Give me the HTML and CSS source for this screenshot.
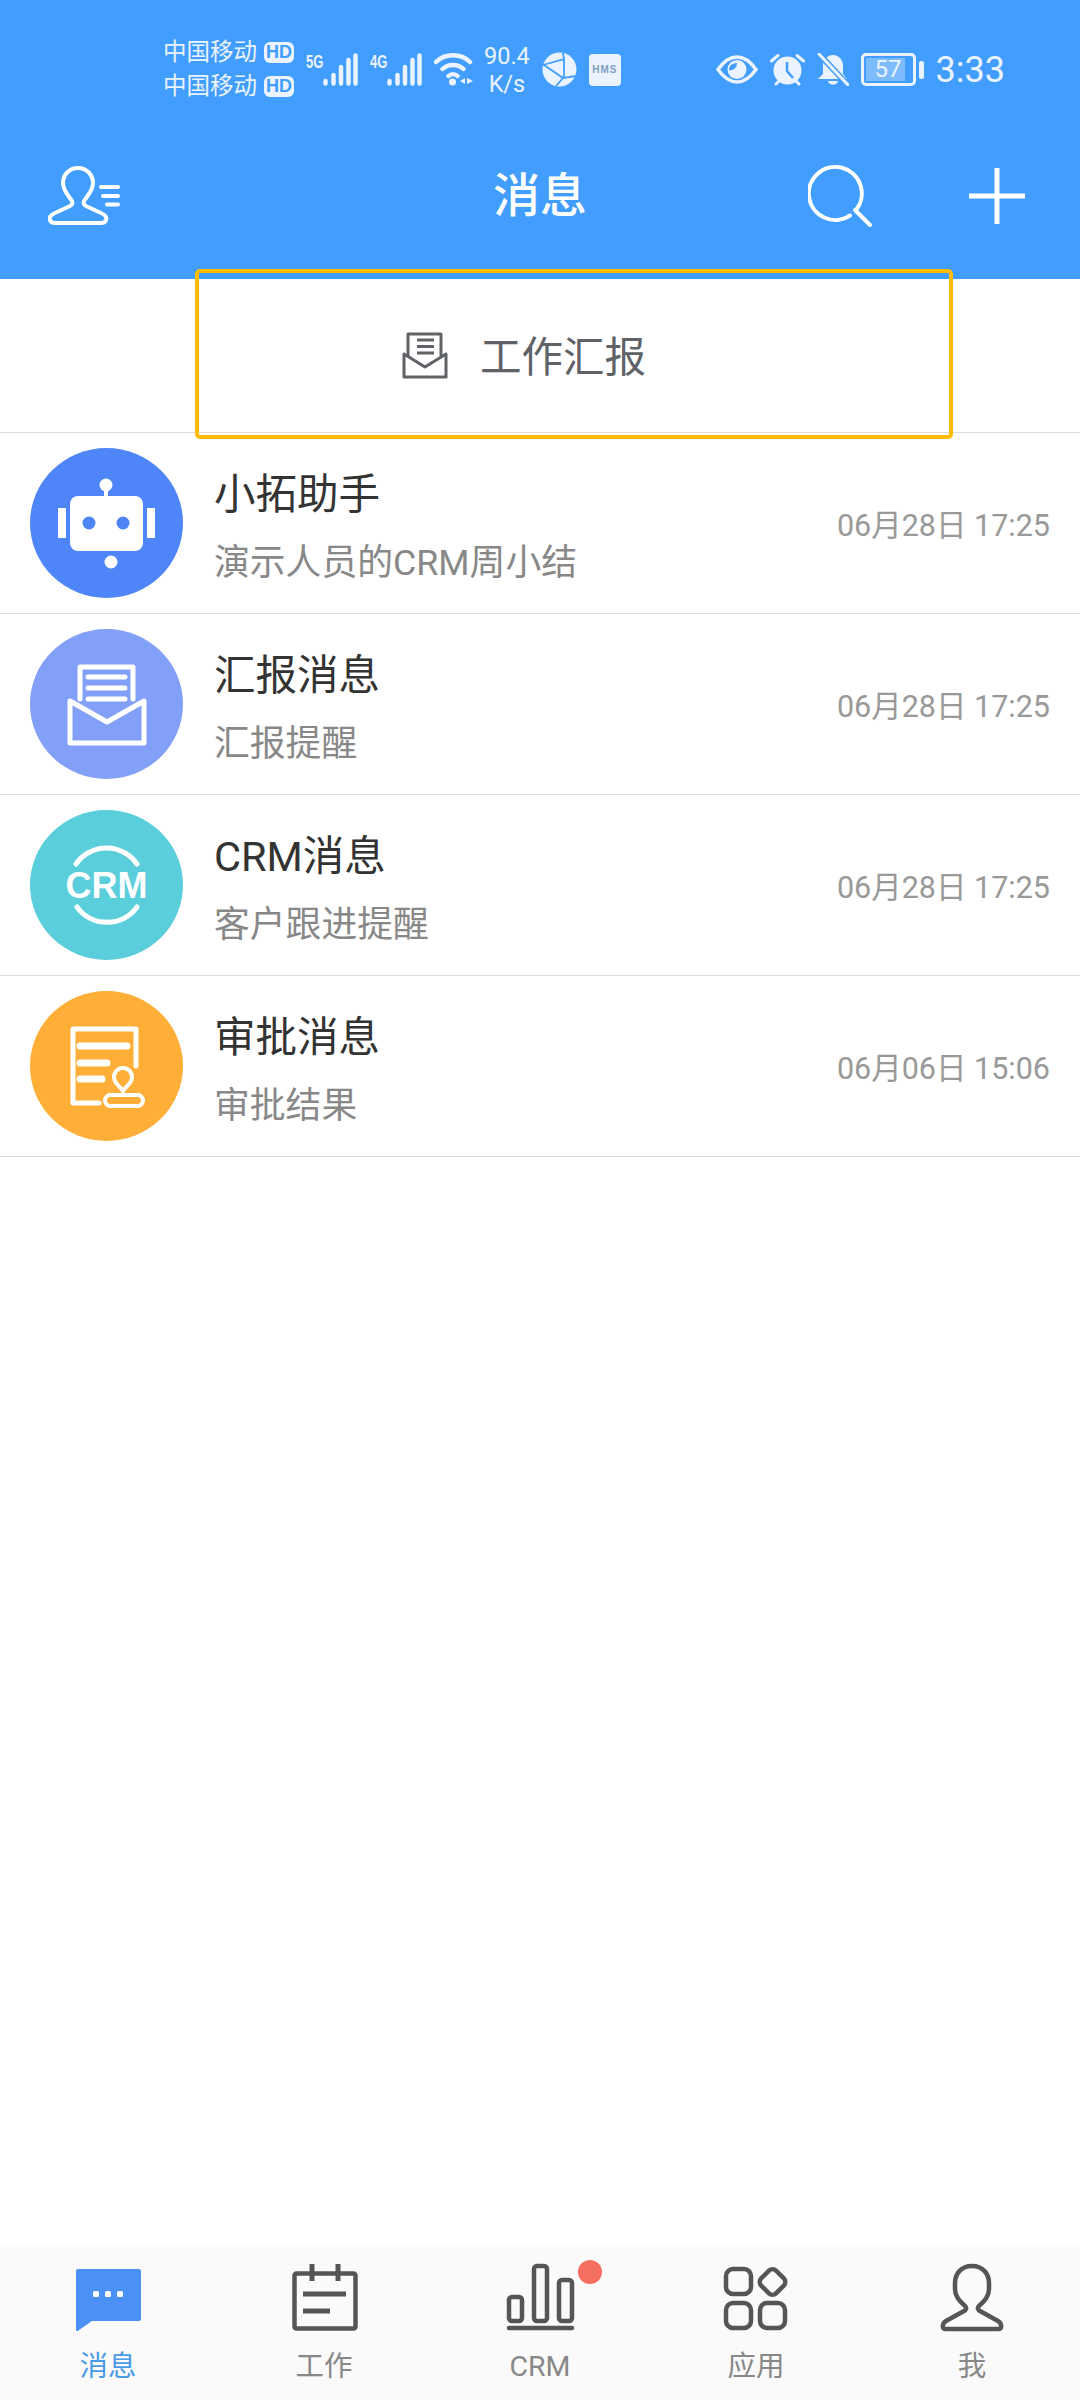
FILE: index.html
```html
<!DOCTYPE html>
<html>
<head>
    <meta charset="UTF-8">
    <title>消息</title>
    <link rel="stylesheet" href="styles.css">
</head>
<body>
<div class="page">
    <div class="header">
        <div class="status">
            <div class="carriers">
                <div class="carrier"><span>中国移动</span><b class="hd">HD</b></div>
                <div class="carrier"><span>中国移动</span><b class="hd">HD</b></div>
            </div>
            <div class="signal">
                <span class="net">5G</span>
                <svg width="35" height="33" viewBox="0 0 35 33"><path d="M2.500 28v2.500M10.500 22v8.500M18 14v16.500M25.500 7v23.500M32.500 2.500v28" class="bars"/></svg>
            </div>
            <div class="signal">
                <span class="net">4G</span>
                <svg width="35" height="33" viewBox="0 0 35 33"><path d="M2.500 28v2.500M10.500 22v8.500M18 14v16.500M25.500 7v23.500M32.500 2.500v28" class="bars"/></svg>
            </div>
            <svg width="40" height="33" viewBox="0 0 40 33">
                <path d="M2 9C11 0 27 0 36 9M8.500 16C14 10.500 24 10.500 29.500 16M14.500 23C17 20.500 21 20.500 23.500 23" class="wifi"/>
                <circle cx="18.500" cy="29" r="3.500" fill="#eaf3ff"/>
                <path d="M31 25v6l-5-3zM33 25v6l6-3z" fill="#eaf3ff"/>
            </svg>
            <div class="speed"><span>90.4</span><span>K/s</span></div>
            <svg width="35" height="35" viewBox="0 0 35 35">
                <circle cx="17.500" cy="17.500" r="17" fill="#eaf3ff"/>
                <path d="M1 13L22 7L21 1M2 13L21 26L14 34M22 7L22 26L34 24" fill="none" stroke="#429efe" stroke-width="1.800"/>
            </svg>
            <div class="hms">HMS</div>
            <div class="status-right">
                <svg width="42" height="29" viewBox="0 0 42 29">
                    <path d="M2 14.500C8 6 15 2 21 2C27 2 34 6 40 14.500C34 23 27 27 21 27C15 27 8 23 2 14.500Z" fill="none" stroke="#eaf3ff" stroke-width="3.500"/>
                    <circle cx="21" cy="14.500" r="9.500" fill="#eaf3ff"/>
                    <path d="M13 15C17 16 21 13 21 8C16 8 13 11 13 15Z" fill="#429efe"/>
                </svg>
                <svg width="35" height="33" viewBox="0 0 35 33">
                    <circle cx="17.500" cy="17.500" r="14" fill="#eaf3ff"/>
                    <path d="M17 9v9l6 7" fill="none" stroke="#429efe" stroke-width="2.500"/>
                    <path d="M1.500 8L8 2.500M33.500 8L27 2.500M6 31l3-3M29 31l-3-3" stroke="#eaf3ff" stroke-width="3" stroke-linecap="round"/>
                </svg>
                <svg width="32" height="33" viewBox="0 0 32 33">
                    <path d="M16 2C22 2 26 7 26 13V21L30 26H1L6 21V13C6 7 10 2 16 2ZM11 28H21C20 33 12 33 11 28Z" fill="#eaf3ff"/>
                    <path d="M2 1L31 32" stroke="#429efe" stroke-width="6"/>
                    <path d="M2 1L31 32" stroke="#eaf3ff" stroke-width="3" stroke-linecap="round"/>
                </svg>
                <div class="battery">
                    <div class="battery-body"><div class="battery-fill"></div><span>57</span></div>
                    <div class="battery-nub"></div>
                </div>
                <span class="clock">3:33</span>
            </div>
        </div>
        <div class="titlebar">
            <div class="bar-left">
                <svg width="72" height="60" viewBox="0 0 72 60" class="line-icon top-icon">
                    <path d="M30 2C21 2 15 9 15 17C15 25 21 30 24 35C25 38 24 39 22 40L7 47C2 49 1 52 2 54C3 57 5 57 7 57H53C55 57 57 57 58 54C59 52 58 49 53 47L38 40C36 39 35 38 36 35C39 30 45 25 45 17C45 9 39 2 30 2Z"/>
                    <path d="M53 21H70M55 30H70M59 38.500H70"/>
                </svg>
            </div>
            <h1>消息</h1>
            <div class="bar-right">
                <svg width="64" height="64" viewBox="0 0 64 64" class="line-icon top-icon search">
                    <path d="M48 47A26.500 26.500 0 1 0 42 52.500M47 47L62 62"/>
                </svg>
                <svg width="56" height="56" viewBox="0 0 56 56" class="line-icon plus">
                    <path d="M28 0V56M0 28H56"/>
                </svg>
            </div>
        </div>
    </div>

    <div class="report-tab">
        <svg width="46" height="47" viewBox="0 0 46 47" class="report-icon">
            <path d="M6 24V2H39V24M15 8H32M15 14.500H32M15 21H32"/>
            <path d="M2 22L23 35L44 22V45H2Z"/>
        </svg>
        <span>工作汇报</span>
    </div>

    <div class="list">
        <div class="row">
            <div class="avatar robot">
                <svg width="153" height="150" viewBox="0 0 153 150">
                    <rect x="40" y="48" width="73" height="55" rx="8" fill="#fff"/>
                    <rect x="28" y="60" width="8" height="30" fill="#fff"/>
                    <rect x="117" y="60" width="8" height="30" fill="#fff"/>
                    <circle cx="59" cy="75" r="6.500" fill="#4e85f8"/>
                    <circle cx="93" cy="75" r="6.500" fill="#4e85f8"/>
                    <circle cx="76" cy="37" r="6.500" fill="#fff"/>
                    <rect x="74" y="38" width="4" height="11" fill="#fff"/>
                    <circle cx="81" cy="114" r="6.500" fill="#fff"/>
                </svg>
            </div>
            <div class="text">
                <div class="name">小拓助手</div>
                <div class="sub">演示人员的CRM周小结</div>
            </div>
            <div class="date">06月28日 17:25</div>
        </div>
        <div class="row">
            <div class="avatar report">
                <svg width="153" height="150" viewBox="0 0 153 150" class="line-icon">
                    <path d="M50 70V38H103V70"/>
                    <path d="M58 48H95M58 59H95M58 70H95"/>
                    <path d="M40 72L77 93L114 72V114H40Z"/>
                </svg>
            </div>
            <div class="text">
                <div class="name">汇报消息</div>
                <div class="sub">汇报提醒</div>
            </div>
            <div class="date">06月28日 17:25</div>
        </div>
        <div class="row">
            <div class="avatar crm">
                <svg width="153" height="150" viewBox="0 0 153 150" class="line-icon">
                    <path d="M46 54A37 37 0 0 1 107 54M47 97A37 37 0 0 0 107 97"/>
                    <text x="76.500" y="88" class="crm-text">CRM</text>
                </svg>
            </div>
            <div class="text">
                <div class="name">CRM消息</div>
                <div class="sub">客户跟进提醒</div>
            </div>
            <div class="date">06月28日 17:25</div>
        </div>
        <div class="row">
            <div class="avatar approve">
                <svg width="153" height="150" viewBox="0 0 153 150" class="line-icon">
                    <path d="M106 75V38H43V112H69"/>
                    <path d="M50 55H97M50 72H77M50 88H72" class="thick"/>
                    <rect x="75" y="104" width="38" height="11" rx="5.500" class="thin"/>
                    <path d="M93 100C91 96 84 93 84 86A9 9 0 1 1 102 86C102 93 95 96 93 100Z" class="thin"/>
                </svg>
            </div>
            <div class="text">
                <div class="name">审批消息</div>
                <div class="sub">审批结果</div>
            </div>
            <div class="date">06月06日 15:06</div>
        </div>
    </div>

    <div class="tabbar">
        <div class="tab active">
            <div class="tab-icon">
                <svg width="72" height="70" viewBox="0 0 72 70">
                    <path d="M6 6H67a2 2 0 0 1 2 2V56a2 2 0 0 1-2 2H20L7 67a1.300 1.300 0 0 1-3-1V8a2 2 0 0 1 2-2Z" fill="#4b90f5"/>
                    <rect x="21" y="28" width="6" height="6" rx="1.500" fill="#fff"/>
                    <rect x="33" y="28" width="6" height="6" rx="1.500" fill="#fff"/>
                    <rect x="45" y="28" width="6" height="6" rx="1.500" fill="#fff"/>
                </svg>
            </div>
            <span>消息</span>
        </div>
        <div class="tab">
            <div class="tab-icon">
                <svg width="72" height="70" viewBox="0 0 72 70" class="tab-line">
                    <rect x="6.500" y="10.500" width="61" height="55" rx="2"/>
                    <path d="M24 1V18M50 1V18" class="tick"/>
                    <path d="M15 31H58M15 48H42" class="tick"/>
                </svg>
            </div>
            <span>工作</span>
        </div>
        <div class="tab">
            <div class="tab-icon">
                <svg width="72" height="70" viewBox="0 0 72 70" class="tab-line">
                    <rect x="5" y="34" width="13" height="24" rx="3"/>
                    <rect x="30" y="3" width="13" height="55" rx="3"/>
                    <rect x="55" y="17" width="13" height="41" rx="3"/>
                    <path d="M5 65H68"/>
                </svg>
                <div class="dot"></div>
            </div>
            <span>CRM</span>
        </div>
        <div class="tab">
            <div class="tab-icon">
                <svg width="72" height="70" viewBox="0 0 72 70" class="tab-line">
                    <rect x="6" y="6" width="25" height="25" rx="7"/>
                    <rect x="6" y="40" width="25" height="25" rx="7"/>
                    <rect x="40" y="40" width="25" height="25" rx="7"/>
                    <rect x="42" y="8.500" width="21" height="21" rx="5" transform="rotate(45 52.500 19)"/>
                </svg>
            </div>
            <span>应用</span>
        </div>
        <div class="tab">
            <div class="tab-icon">
                <svg width="72" height="70" viewBox="0 0 72 70" class="tab-line">
                    <path d="M36 3C25 3 19 11 19 20V26C19 33 23 38 29 43C31 45 30 47 28 48L10 58C6 60 6 66 9 66H63C66 66 66 60 62 58L44 48C42 47 41 45 43 43C49 38 53 33 53 26V20C53 11 47 3 36 3Z"/>
                </svg>
            </div>
            <span>我</span>
        </div>
    </div>

    <div class="highlight"></div>
</div>
</body>
</html>
```

FILE: styles.css
```css
* {
    box-sizing: border-box;
}
body {
    margin: 0;
    background: #fff;
    font-family: Roboto, "Noto Sans CJK SC", sans-serif;
}
svg {
    display: block;
    flex-shrink: 0;
}
.page {
    position: relative;
    width: 1080px;
    height: 2400px;
    display: flex;
    flex-direction: column;
    overflow: hidden;
}

/* header */
.header {
    height: 279px;
    background: #429efe;
    color: #fff;
}
.status {
    height: 139px;
    display: flex;
    align-items: center;
    gap: 12px;
    padding-left: 163px;
    color: #eaf3ff;
}
.carriers {
    display: flex;
    flex-direction: column;
    gap: 5px;
    margin-top: -1px;
}
.carrier {
    display: flex;
    align-items: center;
    gap: 7px;
    font-size: 23.500px;
    line-height: 29px;
}
.hd {
    width: 30px;
    height: 21px;
    border-radius: 6px;
    background: #eaf3ff;
    color: #429efe;
    font-family: "Liberation Sans", sans-serif;
    font-size: 18px;
    line-height: 21px;
    text-align: center;
}
.signal {
    display: flex;
    align-items: flex-start;
}
.net {
    width: 17px;
    margin-top: -2px;
    font-family: "Liberation Sans", sans-serif;
    font-size: 18px;
    font-weight: bold;
    line-height: 22px;
    white-space: nowrap;
    transform: scaleX(.72);
    transform-origin: left;
}
.bars, .wifi {
    fill: none;
    stroke: #eaf3ff;
    stroke-width: 4.500;
    stroke-linecap: round;
}
.speed {
    display: flex;
    flex-direction: column;
    align-items: center;
    margin-left: -2px;
    font-size: 23.500px;
    line-height: 28px;
}
.hms {
    width: 32px;
    height: 32px;
    border-radius: 4px;
    background: #eaf3ff;
    color: #7f9dc0;
    font-family: "Liberation Sans", sans-serif;
    font-size: 10px;
    font-weight: bold;
    letter-spacing: 1px;
    line-height: 32px;
    text-align: center;
}
.status-right {
    display: flex;
    align-items: center;
    gap: 12px;
    margin-left: auto;
    padding-right: 75px;
}
.battery {
    display: flex;
    align-items: center;
    gap: 3px;
}
.battery-body {
    position: relative;
    width: 55px;
    height: 33px;
    border: 3px solid #eaf3ff;
    border-radius: 5px;
    font-size: 24px;
    line-height: 27px;
    text-align: center;
}
.battery-body span {
    position: relative;
}
.battery-fill {
    position: absolute;
    left: 2px;
    top: 2px;
    bottom: 2px;
    width: 39px;
    background: rgba(255, 255, 255, .3);
}
.battery-nub {
    width: 5px;
    height: 18px;
    border-radius: 2px;
    background: #eaf3ff;
}
.clock {
    font-size: 36px;
    line-height: 40px;
}

.titlebar {
    height: 114px;
    display: grid;
    grid-template-columns: 1fr auto 1fr;
    align-items: center;
}
.titlebar h1 {
    margin: 0;
    font-size: 47px;
    font-weight: 500;
    line-height: 60px;
}
.bar-left {
    padding-left: 48px;
}
.bar-right {
    display: flex;
    align-items: center;
    justify-content: flex-end;
    gap: 97px;
    padding-right: 55px;
}
.line-icon {
    fill: none;
    stroke: #fff;
    stroke-width: 5;
    stroke-linecap: round;
    stroke-linejoin: round;
}
.top-icon {
    stroke-width: 4;
}
.search {
    margin-top: -2px;
}
.plus {
    stroke-width: 5;
    stroke-linecap: butt;
}

/* report tab */
.report-tab {
    height: 154px;
    display: flex;
    align-items: center;
    justify-content: center;
    gap: 32px;
    padding-right: 32px;
    padding-top: 4px;
    border-bottom: 1px solid #dcdcdc;
    color: #5f6266;
    font-size: 41.500px;
    line-height: 50px;
}
.report-icon {
    margin-top: -4px;
    fill: none;
    stroke: #5f6266;
    stroke-width: 3;
    stroke-linejoin: round;
}
.highlight {
    position: absolute;
    left: 195px;
    top: 269px;
    width: 758px;
    height: 170px;
    border: 4px solid #ffbb00;
    border-radius: 5px;
}

/* list */
.list {
    flex: 1;
}
.row {
    height: 181px;
    display: flex;
    align-items: center;
    padding: 0 30px;
    border-bottom: 1px solid #dcdcdc;
}
.avatar {
    width: 153px;
    height: 150px;
    border-radius: 50%;
    flex-shrink: 0;
}
.robot { background: #4e85f8; }
.report { background: #83a0f9; }
.crm { background: #5bcedc; }
.approve { background: #ffaf38; }
.crm-text {
    fill: #fff;
    stroke: none;
    font-family: "Liberation Sans", sans-serif;
    font-size: 36px;
    font-weight: bold;
    text-anchor: middle;
}
.thick {
    stroke-width: 7;
}
.thin {
    stroke-width: 4;
}
.text {
    flex: 1;
    margin-left: 31px;
    padding-top: 7px;
}
.name {
    color: #333;
    font-size: 41.500px;
    line-height: 50px;
}
.sub {
    margin-top: 23px;
    color: #888;
    font-size: 35.800px;
    line-height: 40px;
}
.date {
    padding-top: 5px;
    color: #999;
    font-size: 30.500px;
    line-height: 40px;
}

/* bottom tabs */
.tabbar {
    height: 155px;
    display: grid;
    grid-template-columns: repeat(5, 1fr);
    padding-top: 18px;
    background: #fafafa;
}
.tab {
    display: flex;
    flex-direction: column;
    align-items: center;
    gap: 14px;
    color: #888;
    font-size: 28.500px;
    line-height: 40px;
}
.tab.active {
    color: #4b9ae6;
}
.tab-icon {
    position: relative;
    width: 72px;
    height: 70px;
}
.tab-line {
    fill: none;
    stroke: #555;
    stroke-width: 4.500;
    stroke-linecap: round;
}
.tick {
    stroke-width: 5;
    stroke-linecap: butt;
}
.dot {
    position: absolute;
    left: 74px;
    top: -3px;
    width: 24px;
    height: 24px;
    border-radius: 50%;
    background: #f66e5f;
}
```
